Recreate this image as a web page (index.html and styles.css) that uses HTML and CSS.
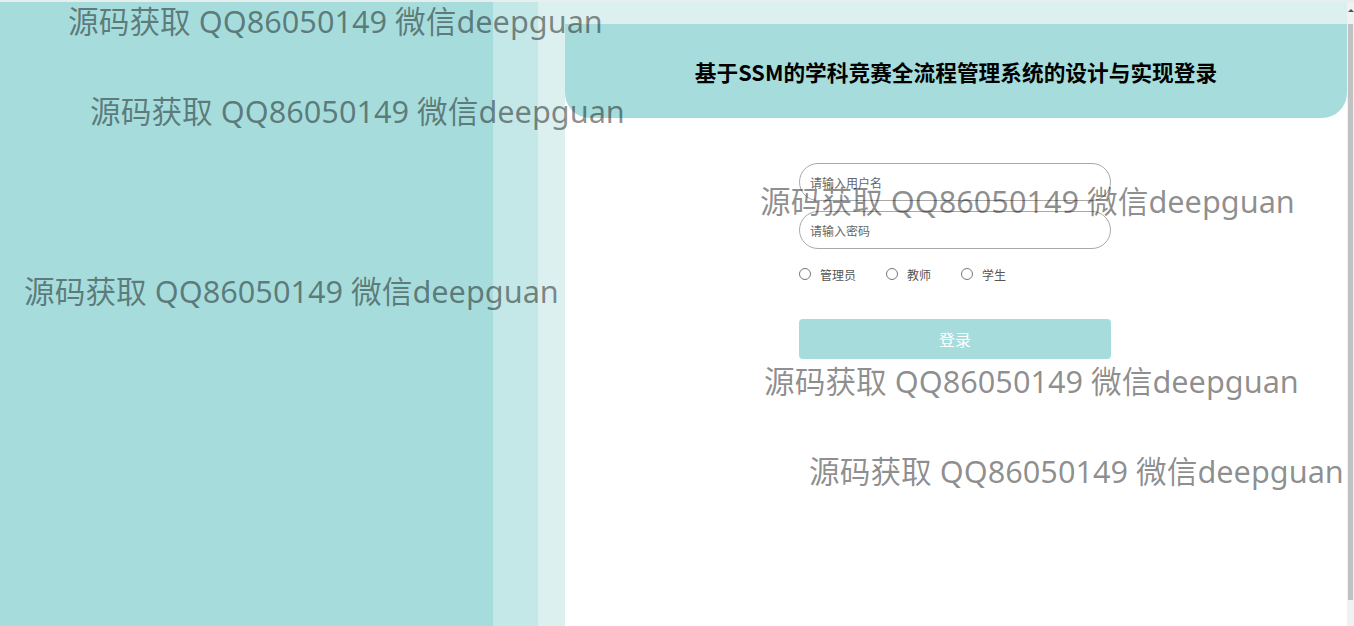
FILE: index.html
```html
<!DOCTYPE html>
<html lang="zh-CN">
<head>
<meta charset="utf-8">
<title>登录</title>
<link rel="stylesheet" href="styles.css">
</head>
<body>
<div class="page">
  <div class="left"></div>
  <div class="band"></div>
  <div class="main">
    <div class="card">
      <div class="header">
        <h1 class="title">基于SSM的学科竞赛全流程管理系统的设计与实现登录</h1>
      </div>
      <form class="form">
        <input class="field" type="text" placeholder="请输入用户名">
        <input class="field" type="password" placeholder="请输入密码">
        <div class="roles">
          <label class="role"><span class="dot"></span>管理员</label>
          <label class="role"><span class="dot"></span>教师</label>
          <label class="role"><span class="dot"></span>学生</label>
        </div>
        <button class="btn" type="button">登录</button>
      </form>
    </div>
  </div>
  <div class="scrollbar"><div class="arrow"></div><div class="thumb"></div></div>

  <div class="wm wm1">源码获取 QQ86050149 微信deepguan</div>
  <div class="wm wm2">源码获取 QQ86050149 微信deepguan</div>
  <div class="wm wm3">源码获取 QQ86050149 微信deepguan</div>
  <div class="wm wm4">源码获取 QQ86050149 微信deepguan</div>
  <div class="wm wm5">源码获取 QQ86050149 微信deepguan</div>
  <div class="wm wm6">源码获取 QQ86050149 微信deepguan</div>
</div>
</body>
</html>
```

FILE: styles.css
```css
* { box-sizing: border-box; }
html, body { margin: 0; padding: 0; }
body {
  font-family: "Noto Sans", "Noto Sans CJK SC", sans-serif;
  background: #fff;
  overflow: hidden;
}
.page {
  position: relative;
  display: flex;
  height: 626px;
  width: 1354px;
  border-top: 2px solid #e6eeee;
}
.left { width: 493px; background: #a6dcdc; }
.band { width: 45px; background: #c4e7e7; }
.main {
  width: 809px;
  background: #dcf0ef;
  padding: 22px 0 0 27px;
  display: flex;
  flex-direction: column;
}
.card { flex: 1; background: #fff; }
.header {
  height: 94px;
  background: #a6dcdc;
  border-radius: 0 0 25px 25px;
  display: flex;
  align-items: center;
  justify-content: center;
}
.title {
  margin: 0;
  font-family: "Noto Sans CJK SC", sans-serif;
  font-size: 21.7px;
  font-weight: 700;
  color: #000;
}
.form {
  width: 312px;
  margin: 45px auto 0;
  display: flex;
  flex-direction: column;
  transform: translateX(-1px);
}
.field {
  height: 38px;
  border: 1px solid #a9a9a9;
  border-radius: 19px;
  padding: 0 10px;
  font-family: "Noto Sans CJK SC", sans-serif;
  font-size: 12px;
  outline: none;
  margin-bottom: 10px;
}
.field::placeholder { color: #666; }
.roles {
  display: flex;
  gap: 30px;
  margin-top: 7px;
  height: 16px;
  align-items: center;
  font-family: "Noto Sans CJK SC", sans-serif;
  font-size: 12px;
  color: #555;
}
.role { display: flex; align-items: center; gap: 9px; }
.dot {
  width: 12px; height: 12px;
  border: 1px solid #777;
  border-radius: 50%;
}
.btn {
  margin-top: 37px;
  height: 40px;
  border: none;
  border-radius: 4px;
  background: #a6dcdc;
  color: #fff;
  font-family: "Noto Sans CJK SC", sans-serif;
  font-size: 16px;
}
.scrollbar {
  width: 7px;
  background: #f1f1f1;
  display: flex;
  flex-direction: column;
  align-items: center;
}
.arrow {
  margin-top: 7px;
  width: 0; height: 0;
  border-left: 3px solid transparent;
  border-right: 3px solid transparent;
  border-bottom: 3px solid #505050;
}
.thumb {
  margin-top: 12px;
  width: 5px;
  height: 576px;
  background: #c1c1c1;
}
.wm {
  position: absolute;
  font-family: "Noto Sans", "Noto Sans CJK SC", sans-serif;
  font-size: 30.7px;
  line-height: 30px;
  white-space: nowrap;
  color: rgba(0, 0, 0, 0.45);
  pointer-events: none;
}
.wm1 { left: 68px; top: 4px; }
.wm2 { left: 90px; top: 94px; }
.wm3 { left: 24px; top: 274px; }
.wm4 { left: 760px; top: 184px; }
.wm5 { left: 764px; top: 364px; }
.wm6 { left: 809px; top: 454px; }
```
